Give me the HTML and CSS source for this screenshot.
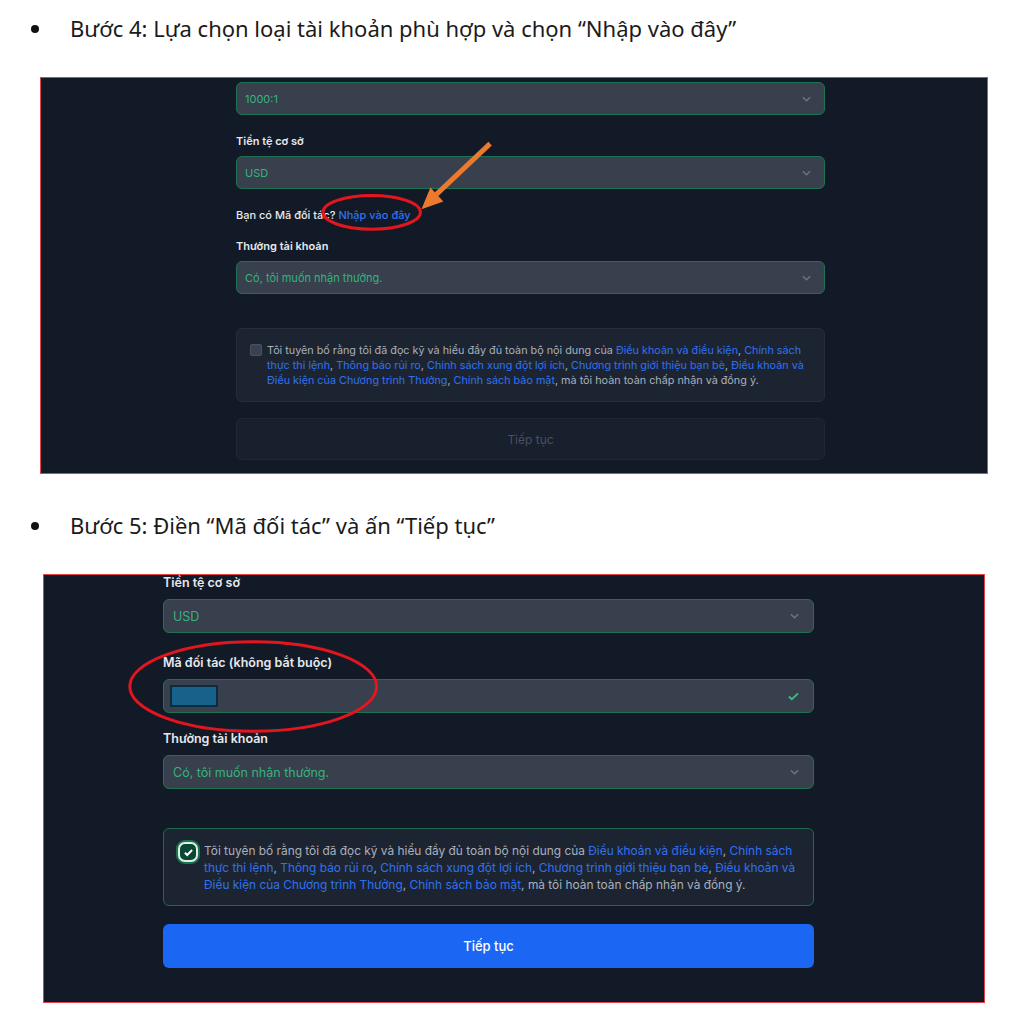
FILE: index.html
```html
<!DOCTYPE html>
<html lang="vi">

<head>
    <meta charset="UTF-8">
    <meta name="viewport" content="width=device-width, initial-scale=1.0">
    <title>Hướng dẫn mở tài khoản</title>
    <link rel="stylesheet" href="styles.css">
</head>

<body>
    <ul class="steps">
        <li class="step">
            <p class="step-title">Bước 4: Lựa chọn loại tài khoản phù hợp và chọn “Nhập vào đây”</p>
            <div class="shot shot-one">
                <div class="form">
                    <div class="select">
                        <span>1000:1</span>
                        <svg class="chevron" viewBox="0 0 10 6"><path d="M1 1l4 4 4-4" /></svg>
                    </div>

                    <div class="field-label">Tiền tệ cơ sở</div>
                    <div class="select">
                        <span>USD</span>
                        <svg class="chevron" viewBox="0 0 10 6"><path d="M1 1l4 4 4-4" /></svg>
                    </div>

                    <div class="partner-line">Bạn có Mã đối tác? <a href="#">Nhập vào đây</a></div>

                    <div class="field-label">Thưởng tài khoản</div>
                    <div class="select">
                        <span>Có, tôi muốn nhận thưởng.</span>
                        <svg class="chevron" viewBox="0 0 10 6"><path d="M1 1l4 4 4-4" /></svg>
                    </div>

                    <div class="agree">
                        <span class="check-box"></span>
                        <p class="agree-text">Tôi tuyên bố rằng tôi đã đọc kỹ và hiểu đầy đủ toàn bộ nội dung của <a href="#">Điều khoản và điều kiện</a>, <a href="#">Chính sách</a><br><a href="#">thực thi lệnh</a>, <a href="#">Thông báo rủi ro</a>, <a href="#">Chính sách xung đột lợi ích</a>, <a href="#">Chương trình giới thiệu bạn bè</a>, <a href="#">Điều khoản và</a><br><a href="#">Điều kiện của Chương trình Thưởng</a>, <a href="#">Chính sách bảo mật</a>, mà tôi hoàn toàn chấp nhận và đồng ý.</p>
                    </div>

                    <button class="btn-next" disabled>Tiếp tục</button>
                </div>

                <!-- annotation drawn over the screenshot -->
                <svg class="marks" viewBox="0 0 948 397">
                    <ellipse cx="331" cy="135" rx="49" ry="17" class="ring" />
                    <line x1="450" y1="66" x2="396" y2="117" class="arrow" />
                    <polygon points="381,132 390,110 403,124" class="arrow-head" />
                </svg>
            </div>
        </li>

        <li class="step">
            <p class="step-title">Bước 5: Điền “Mã đối tác” và ấn “Tiếp tục”</p>
            <div class="shot shot-two">
                <div class="form">
                    <div class="field-label first">Tiền tệ cơ sở</div>
                    <div class="select">
                        <span>USD</span>
                        <svg class="chevron" viewBox="0 0 10 6"><path d="M1 1l4 4 4-4" /></svg>
                    </div>

                    <div class="field-label">Mã đối tác (không bắt buộc)</div>
                    <div class="select input-filled">
                        <span class="code-mask"></span>
                        <svg class="ok-mark" viewBox="0 0 12 9"><path d="M1 4.5l3.2 3L11 1" /></svg>
                    </div>

                    <div class="field-label">Thưởng tài khoản</div>
                    <div class="select">
                        <span>Có, tôi muốn nhận thưởng.</span>
                        <svg class="chevron" viewBox="0 0 10 6"><path d="M1 1l4 4 4-4" /></svg>
                    </div>

                    <div class="agree checked">
                        <span class="check-box">
                            <svg viewBox="0 0 12 10"><path d="M2 5.2l2.6 2.6L10 2.2" /></svg>
                        </span>
                        <p class="agree-text">Tôi tuyên bố rằng tôi đã đọc kỹ và hiểu đầy đủ toàn bộ nội dung của <a href="#">Điều khoản và điều kiện</a>, <a href="#">Chính sách</a><br><a href="#">thực thi lệnh</a>, <a href="#">Thông báo rủi ro</a>, <a href="#">Chính sách xung đột lợi ích</a>, <a href="#">Chương trình giới thiệu bạn bè</a>, <a href="#">Điều khoản và</a><br><a href="#">Điều kiện của Chương trình Thưởng</a>, <a href="#">Chính sách bảo mật</a>, mà tôi hoàn toàn chấp nhận và đồng ý.</p>
                    </div>

                    <button class="btn-next">Tiếp tục</button>
                </div>

                <svg class="marks" viewBox="0 0 942 429">
                    <ellipse cx="209" cy="112" rx="124" ry="45" class="ring" />
                </svg>
            </div>
        </li>
    </ul>
</body>

</html>
```

FILE: styles.css
```css
body {
    margin: 0;
    background: #ffffff;
    font-family: "Noto Sans", Arial, sans-serif;
}

.steps {
    list-style: none;
    margin: 0;
    padding: 13px 0 0 0;
}

.step + .step {
    margin-top: 36px;
}

.step-title {
    position: relative;
    margin: 0 0 34px 70px;
    font-size: 22px;
    line-height: 30px;
    color: #1b1b1b;
}

.step-title::before {
    content: "";
    position: absolute;
    left: -39px;
    top: 12px;
    width: 8px;
    height: 8px;
    border-radius: 50%;
    background: #111;
}

/* screenshot panels */
.shot {
    position: relative;
    background: #131a27;
    border: 1px solid #e2434a;
    box-sizing: border-box;
    font-family: Inter, "Noto Sans", sans-serif;
}

.shot-one {
    margin-left: 40px;
    width: 948px;
    height: 397px;
}

.shot-two {
    margin-left: 43px;
    width: 942px;
    height: 429px;
}

.form {
    display: flex;
    flex-direction: column;
}

.shot-one .form {
    margin-left: 195px;
    width: 589px;
    padding-top: 4px;
    font-size: 11px;
}

.shot-two .form {
    margin-left: 119px;
    width: 651px;
    font-size: 12px;
}

.field-label,
.partner-line {
    color: #e6e8ec;
    font-weight: 600;
    line-height: 16px;
    margin-top: 18px;
    margin-bottom: 7px;
}

.partner-line {
    font-weight: 500;
    margin-bottom: 0;
}

.partner-line + .field-label {
    margin-top: 15px;
}

.partner-line a,
.agree-text a {
    color: #2f72f0;
    text-decoration: none;
}

.select {
    display: flex;
    align-items: center;
    justify-content: space-between;
    height: 33px;
    box-sizing: border-box;
    padding: 0 13px 0 8px;
    background: #383f4d;
    border: 1px solid #1d7252;
    border-radius: 6px;
    color: #37b37c;
}

.chevron {
    width: 9px;
    height: 6px;
    fill: none;
    stroke: #6d7482;
    stroke-width: 1.6;
}

.agree {
    display: flex;
    align-items: flex-start;
    margin-top: 34px;
    height: 74px;
    box-sizing: border-box;
    padding: 14px 10px 0 13px;
    background: #1d2431;
    border: 1px solid #252c3a;
    border-radius: 6px;
}

.check-box {
    flex: none;
    width: 12px;
    height: 12px;
    margin: 1px 5px 0 0;
    box-sizing: border-box;
    background: #3a4150;
    border: 1px solid #4a5261;
    border-radius: 2px;
}

.agree-text {
    margin: 0;
    color: #a9b0bc;
    font-size: 10.8px;
    line-height: 15px;
    white-space: nowrap;
}

.btn-next {
    margin-top: 16px;
    height: 42px;
    border: 1px solid #202838;
    border-radius: 6px;
    background: #18202d;
    color: #485061;
    font-family: inherit;
    font-size: 12px;
}

/* second screenshot is slightly larger */
.shot-two .field-label {
    font-size: 12.5px;
    line-height: 18px;
    margin-top: 21px;
}

.shot-two .field-label.first {
    margin-top: -1px;
}

.shot-two .select + .field-label + .select + .field-label {
    margin-top: 17px;
}

.shot-two .select {
    height: 34px;
    padding: 0 14px 0 9px;
    font-size: 12.5px;
}

.input-filled .code-mask {
    width: 48px;
    height: 22px;
    margin-left: -3px;
    box-sizing: border-box;
    background: #17628a;
    border: 2px solid #0e2c3e;
}

.ok-mark {
    width: 11px;
    height: 9px;
    fill: none;
    stroke: #33c27f;
    stroke-width: 2;
}

.shot-two .agree {
    margin-top: 39px;
    height: 78px;
    padding: 13px 10px 0 13px;
    border-color: #1c6b4d;
}

.shot-two .check-box {
    width: 20px;
    height: 20px;
    margin: 0 6px 0 1px;
    display: flex;
    align-items: center;
    justify-content: center;
    background: #0c4634;
    border: 2px solid #e8ece9;
    border-radius: 7px;
    box-shadow: 0 0 0 2px #167652;
}

.check-box svg {
    width: 11px;
    height: 9px;
    fill: none;
    stroke: #ffffff;
    stroke-width: 2.2;
}

.shot-two .agree-text {
    font-size: 11.9px;
    line-height: 17px;
}

.shot-two .btn-next {
    margin-top: 18px;
    height: 44px;
    border: none;
    background: #1b66f3;
    color: #ffffff;
    font-size: 13px;
    font-weight: 500;
}

.marks {
    position: absolute;
    left: 0;
    top: 0;
    width: 100%;
    height: 100%;
    pointer-events: none;
}

.ring {
    fill: none;
    stroke: #e3161d;
    stroke-width: 3;
}

.arrow {
    stroke: #ec7a2d;
    stroke-width: 5;
}

.arrow-head {
    fill: #ec7a2d;
}
```
